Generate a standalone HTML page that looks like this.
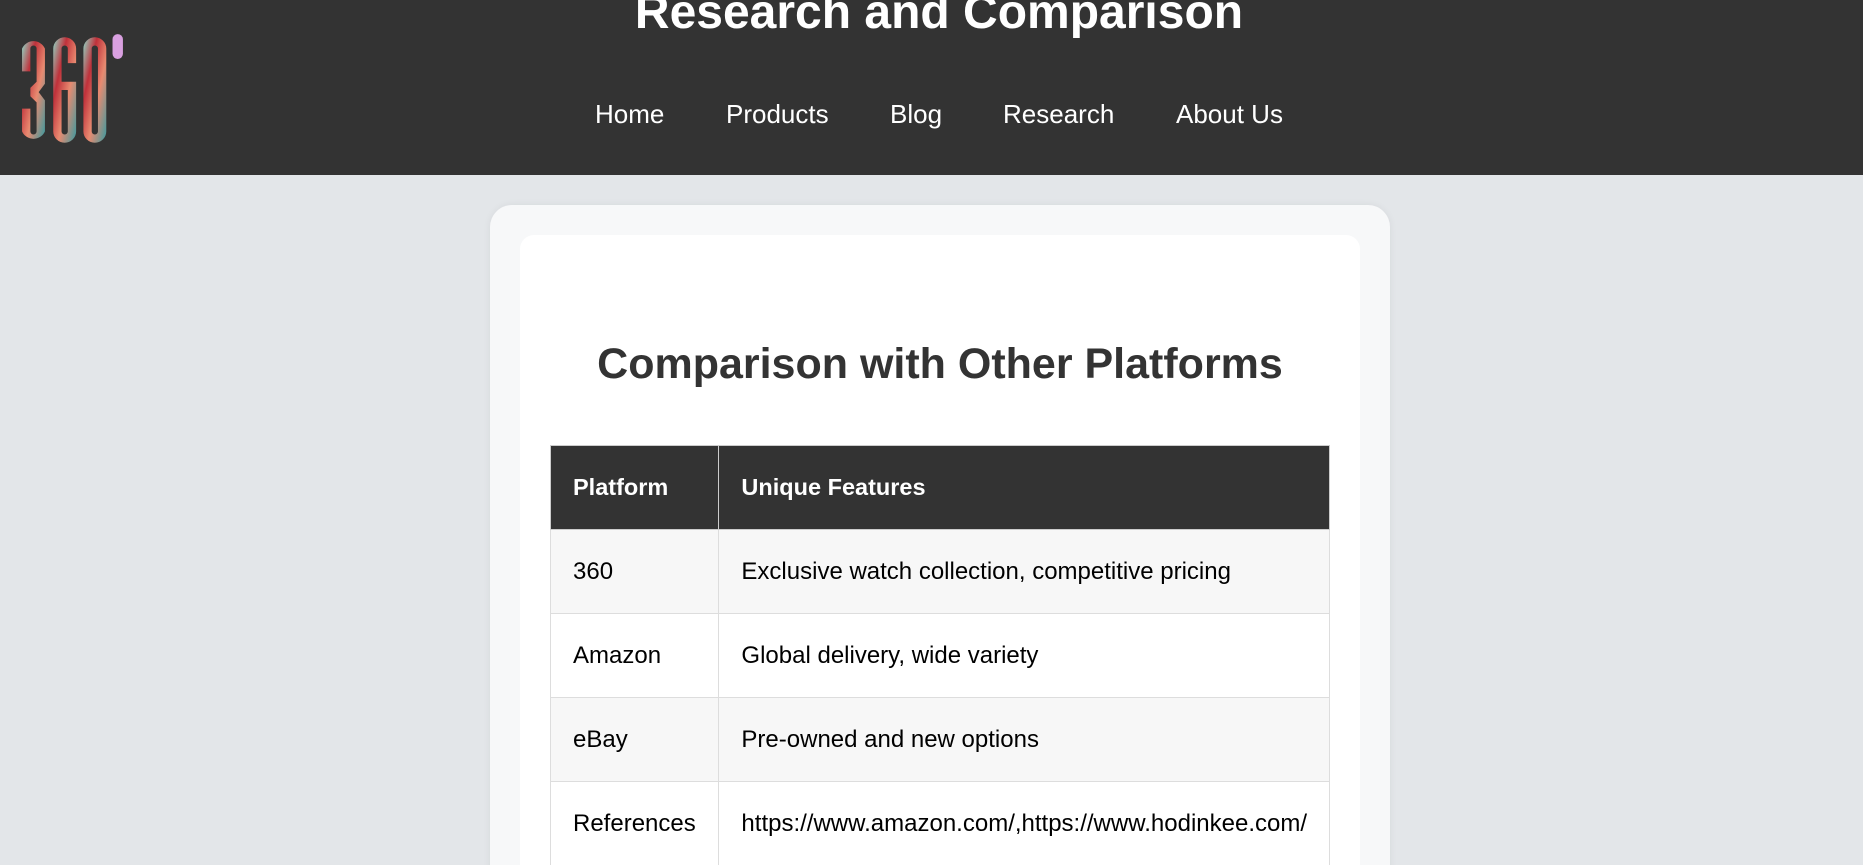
<!DOCTYPE html>
<html><head><meta charset="utf-8"><style>
*{margin:0;padding:0;box-sizing:border-box}
html,body{width:1863px;height:865px;overflow:hidden}
body{font-family:"Liberation Sans",Arial,sans-serif;background:#e3e6e9;position:relative}
header{position:absolute;left:0;top:0;width:1863px;height:175px;background:#333}
h1{position:absolute;left:0;width:1863px;text-align:center;top:-15px;color:#fff;font-size:48px;font-weight:bold;padding-left:15px}
nav{position:absolute;top:99px;left:0;width:1863px;color:#fff;font-size:26px}
nav span{position:absolute}
.card{position:absolute;left:490px;top:205px;width:900px;height:700px;background:#f7f8f9;border-radius:22px;box-shadow:0 0 8px rgba(0,0,0,.06)}
.inner{position:absolute;left:520px;top:235px;width:840px;height:700px;background:#fff;border-radius:14px}
h2{position:absolute;left:520px;width:840px;text-align:center;top:340px;font-size:43px;color:#333;font-weight:bold}
table{position:absolute;left:550px;top:445px;width:780px;border-collapse:collapse;font-size:24px;color:#000}
td,th{border:1px solid #ddd;padding:0 22px;height:84px;text-align:left;white-space:nowrap}
th{background:#333;color:#fff;font-weight:bold;height:84px;border-color:#ccc;font-size:23.5px}
tr:nth-child(even) td{background:#f7f7f7}
td:first-child,th:first-child{width:169px}
</style></head><body>
<header>
<svg style="position:absolute;left:21px;top:30px" width="104" height="120" viewBox="0 0 100 116" preserveAspectRatio="none">
<defs><linearGradient id="g" x1="0" y1="0" x2="1" y2="1"><stop offset="0" stop-color="#8fd8c8"/><stop offset=".3" stop-color="#c0303a"/><stop offset=".6" stop-color="#e88a70"/><stop offset="1" stop-color="#3a9aa0"/></linearGradient></defs>
<path d="M1 18a12 12 0 0 1 22 0v34l-6 8 6 8v30a12 12 0 0 1-22 0V76h8v22a3 3 0 0 0 6 0V70l-6-6v-8l6-6V18a3 3 0 0 0-6 0v22H1z" fill="url(#g)"/>
<path d="M31 18a11 11 0 0 1 22 0v14h-8V18a3 3 0 0 0-6 0v32h14v48a11 11 0 0 1-22 0zM39 58v40a3 3 0 0 0 6 0V58z" fill="url(#g)"/>
<path d="M60 18a11 11 0 0 1 22 0v80a11 11 0 0 1-22 0zM68 18v80a3 3 0 0 0 6 0V18a3 3 0 0 0-6 0z" fill="url(#g)"/>
<rect x="88" y="4" width="10" height="24" rx="5" fill="#d9a0e0"/>
</svg>
<h1>Research and Comparison</h1>
<nav><span style="left:595px">Home</span><span style="left:726px">Products</span><span style="left:890px">Blog</span><span style="left:1003px">Research</span><span style="left:1176px">About Us</span></nav>
</header>
<div class="card"></div>
<div class="inner"></div>
<h2>Comparison with Other Platforms</h2>
<table>
<tr><th>Platform</th><th>Unique Features</th></tr>
<tr><td>360</td><td>Exclusive watch collection, competitive pricing</td></tr>
<tr><td>Amazon</td><td>Global delivery, wide variety</td></tr>
<tr><td>eBay</td><td>Pre-owned and new options</td></tr>
<tr><td>References</td><td>https://www.amazon.com/,https://www.hodinkee.com/</td></tr>
</table>
</body></html>
